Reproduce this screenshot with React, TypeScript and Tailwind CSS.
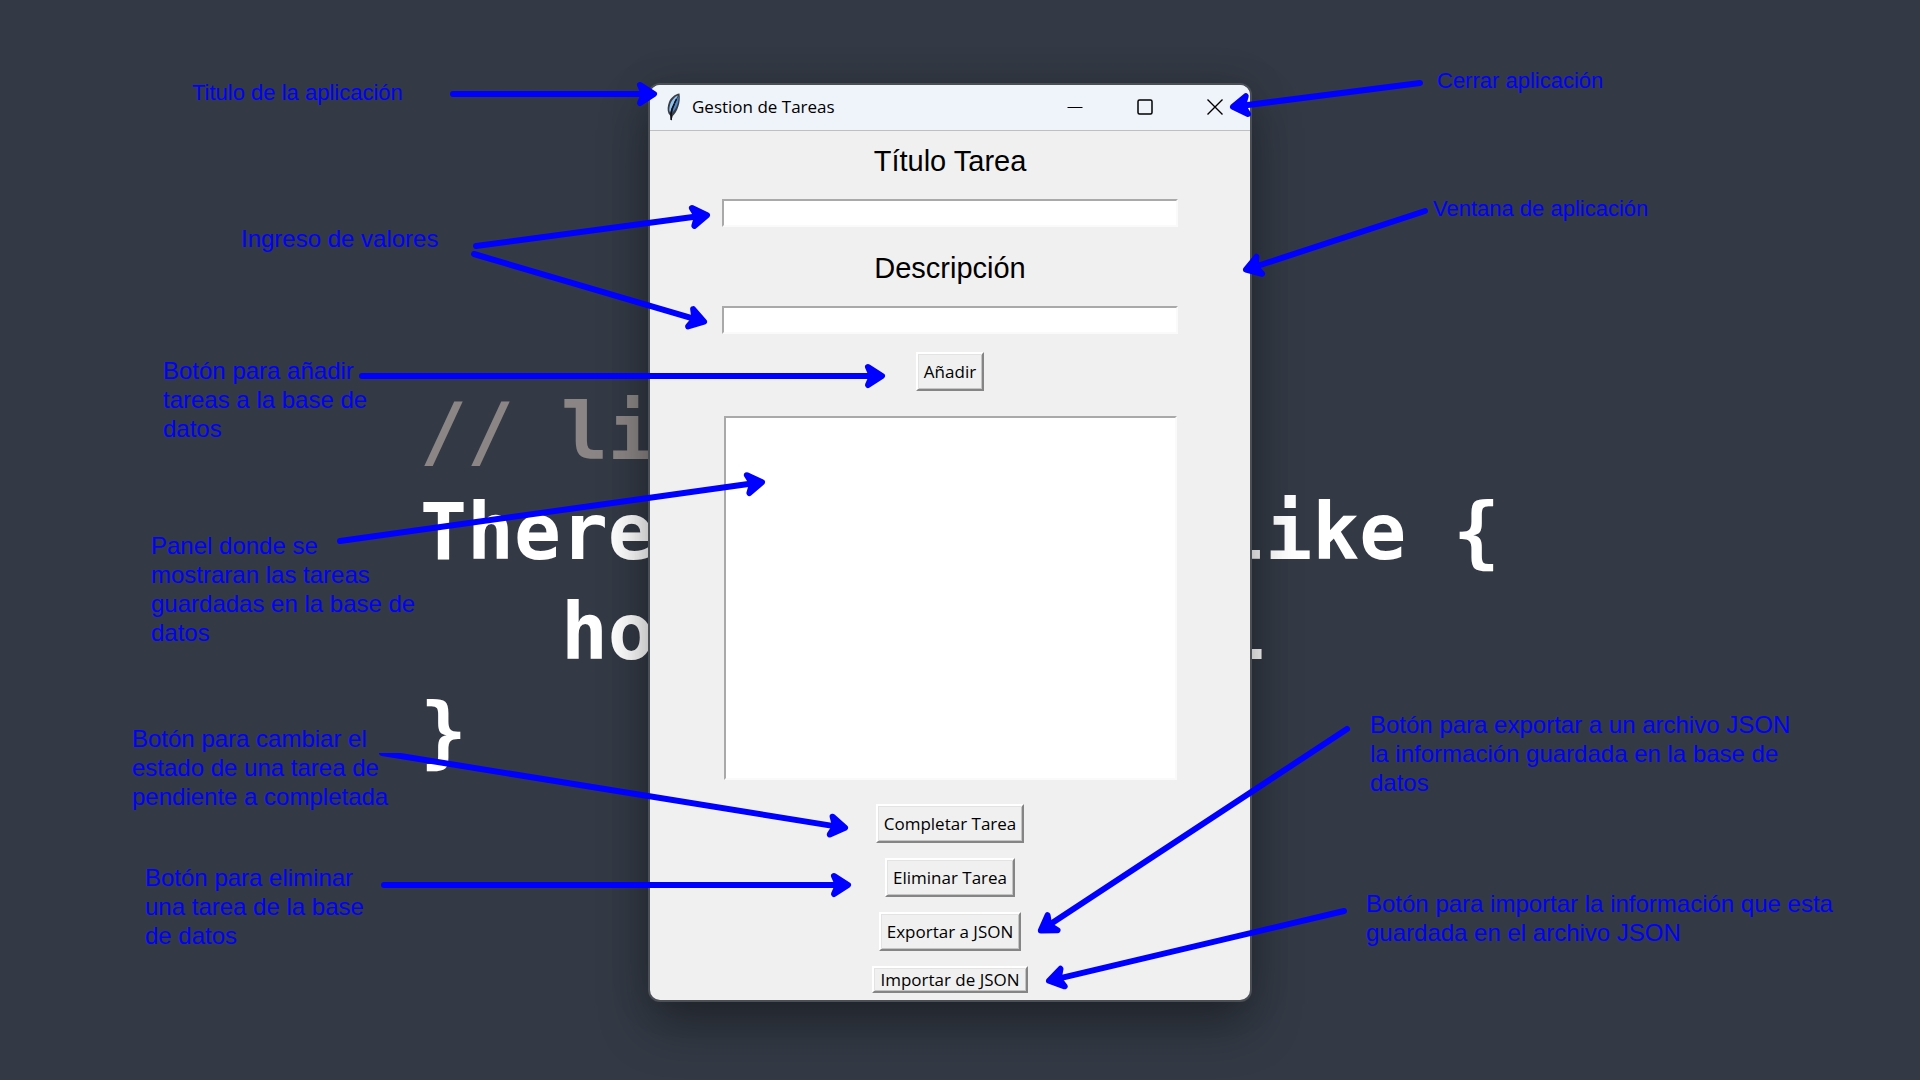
const labels = [
  { x: 192, y: 78, size: 'text-[22px]', lines: ['Titulo de la aplicación'] },
  { x: 241, y: 224, size: 'text-2xl', lines: ['Ingreso de valores'] },
  { x: 163, y: 356, size: 'text-2xl', lines: ['Botón para añadir', 'tareas a la base de', 'datos'] },
  { x: 151, y: 531, size: 'text-2xl', lines: ['Panel donde se', 'mostraran las tareas', 'guardadas en la base de', 'datos'] },
  { x: 132, y: 724, size: 'text-2xl', lines: ['Botón para cambiar el', 'estado de una tarea de', 'pendiente a completada'] },
  { x: 145, y: 863, size: 'text-2xl', lines: ['Botón para eliminar', 'una tarea de la base', 'de datos'] },
  { x: 1437, y: 66, size: 'text-[22px]', lines: ['Cerrar aplicación'] },
  { x: 1433, y: 194, size: 'text-[22px]', lines: ['Ventana de aplicación'] },
  { x: 1370, y: 710, size: 'text-2xl', lines: ['Botón para exportar a un archivo JSON', 'la información guardada en la base de', 'datos'] },
  { x: 1366, y: 889, size: 'text-2xl', lines: ['Botón para importar la información que esta', 'guardada en el archivo JSON'] },
];

const arrows = [
  [453, 94, 655, 94],
  [476, 246, 708, 215],
  [474, 254, 705, 322],
  [362, 376, 883, 376],
  [340, 541, 763, 482],
  [384, 885, 849, 885],
  [1420, 83, 1232, 107],
  [1425, 211, 1245, 270],
  [1347, 729, 1040, 931],
  [1344, 911, 1048, 981],
];

function Arrow({ p }: { p: number[] }) {
  const [x1, y1, x2, y2] = p;
  const length = Math.hypot(x2 - x1, y2 - y1);
  const angle = (Math.atan2(y2 - y1, x2 - x1) * 180) / Math.PI;
  return (
    <g transform={`translate(${x2} ${y2}) rotate(${angle})`}>
      <path d={`M${-length} 0H-4`} strokeWidth="6" />
      <path d="M-15 -9L-1 0L-15 9L-11 0Z" fill="#0000ff" strokeWidth="6" />
    </g>
  );
}

function Feather() {
  return (
    <svg className="h-7 w-4" viewBox="0 0 16 28" aria-hidden="true">
      <path d="M13.500 0.500C9 1 4.500 5 3 9C1.500 13 1 17 2.500 20.500L4.500 23L5.200 28L6.800 23C11 19 15 10 13.500 0.500Z" fill="#3a3d44" />
      <path d="M12 2.500C8.500 3.500 5 8 4 12C3 16 3 18 4.200 19.500C6 14 8 9 12 2.500Z" fill="#8ec3f2" />
      <path d="M12.500 3C10.500 8 7.500 13 6.200 20C10 16 13.300 9 12.500 3Z" fill="#4a86c8" />
      <path d="M10.500 6L8.500 10M8.500 10.500L6 16L5 21L5.200 27" stroke="#0c0f14" strokeWidth="1.600" fill="none" />
    </svg>
  );
}

const bevel =
  'border-2 border-t-white border-l-white border-r-[#858585] border-b-[#858585] bg-[#f0f0f0] px-1.5 font-["Open_Sans",sans-serif] text-[17px] text-black shadow-[inset_1px_1px_0_#e3e3e3,inset_-1px_-1px_0_#c4c4c4]';

const field =
  'max-w-full border-2 border-t-[#a9a9a9] border-l-[#a9a9a9] border-r-[#fafafa] border-b-[#fafafa] bg-white';

export default function App() {
  return (
    <main className='relative flex min-h-screen justify-center overflow-hidden bg-[#333a45] pt-[85px] pr-5 pb-20 font-["Liberation_Sans",sans-serif]'>
      <pre className='absolute top-[382px] left-[420px] font-["DejaVu_Sans_Mono",monospace] text-[78px] leading-[100px] font-bold text-white'>
        <span className="text-[#8b8685]">{'// life motto'}</span>
        {"\nThere's no place like {\n   home: 127.0.0.1\n}"}
      </pre>

      <section className="relative flex w-[600px] flex-col self-start overflow-hidden rounded-[10px] bg-[#f0f0f0] pb-[7px] shadow-[0_0_0_2px_#4b5056,0_24px_50px_rgba(0,0,0,0.35),0_0_40px_rgba(0,0,0,0.15)]">
        <header className="flex h-[46px] items-center border-b border-[#bfbfbf] bg-[#eff3fa] pb-0.5 pl-4">
          <Feather />
          <h1 className='ml-[10px] flex-1 font-["Open_Sans",sans-serif] text-[17px] text-black'>Gestion de Tareas</h1>
          <button aria-label="Minimizar" className="flex h-full w-[70px] items-center justify-center">
            <svg className="size-4" viewBox="0 0 16 16" stroke="#000" strokeWidth="1"><path d="M0.500 8.500H15.500" /></svg>
          </button>
          <button aria-label="Maximizar" className="flex h-full w-[70px] items-center justify-center">
            <svg className="size-4" viewBox="0 0 16 16" stroke="#000" strokeWidth="1.500" fill="none"><rect x="1" y="1" width="14" height="14" rx="1.500" /></svg>
          </button>
          <button aria-label="Cerrar" className="flex h-full w-[70px] items-center justify-center">
            <svg className="size-4" viewBox="0 0 16 16" stroke="#000" strokeWidth="1.400"><path d="M0.500 0.500L15.500 15.500M15.500 0.500L0.500 15.500" /></svg>
          </button>
        </header>

        <form className="flex flex-col items-center" onSubmit={(e) => e.preventDefault()}>
          <label htmlFor="titulo" className="mt-3 text-[29px] leading-9 text-black">Título Tarea</label>
          <input id="titulo" className={`${field} mt-5 h-7 w-[456px]`} />
          <label htmlFor="descripcion" className="mt-[23px] text-[29px] leading-9 text-black">Descripción</label>
          <input id="descripcion" className={`${field} mt-5 h-7 w-[456px]`} />
          <button className={`${bevel} mt-[18px] h-[39px]`}>Añadir</button>
          <textarea aria-label="Tareas" readOnly className={`${field} mt-[25px] block h-[364px] w-[453px] resize-none`} />
          <div className="mt-6 flex flex-col items-center gap-[15px]">
            <button type="button" className={`${bevel} h-[39px]`}>Completar Tarea</button>
            <button type="button" className={`${bevel} h-[39px]`}>Eliminar Tarea</button>
            <button type="button" className={`${bevel} h-[39px]`}>Exportar a JSON</button>
            <button type="button" className={`${bevel} h-[27px] leading-6`}>Importar de JSON</button>
          </div>
        </form>
      </section>

      {labels.map((l) => (
        <p key={l.lines[0]} className={`absolute leading-[29px] whitespace-pre text-[#0000ff] ${l.size}`} style={{ left: l.x, top: l.y }}>
          {l.lines.join('\n')}
        </p>
      ))}
      <svg className="pointer-events-none absolute top-0 left-0" width="1920" height="1080" stroke="#0000ff" strokeLinecap="round" strokeLinejoin="round" fill="none" aria-hidden="true">
        <clipPath id="below-label"><rect x="370" y="753" width="500" height="100" /></clipPath>
        {arrows.map((p) => <Arrow key={p.join()} p={p} />)}
        <g clipPath="url(#below-label)"><Arrow p={[382, 753, 846, 828]} /></g>
      </svg>
    </main>
  );
}
